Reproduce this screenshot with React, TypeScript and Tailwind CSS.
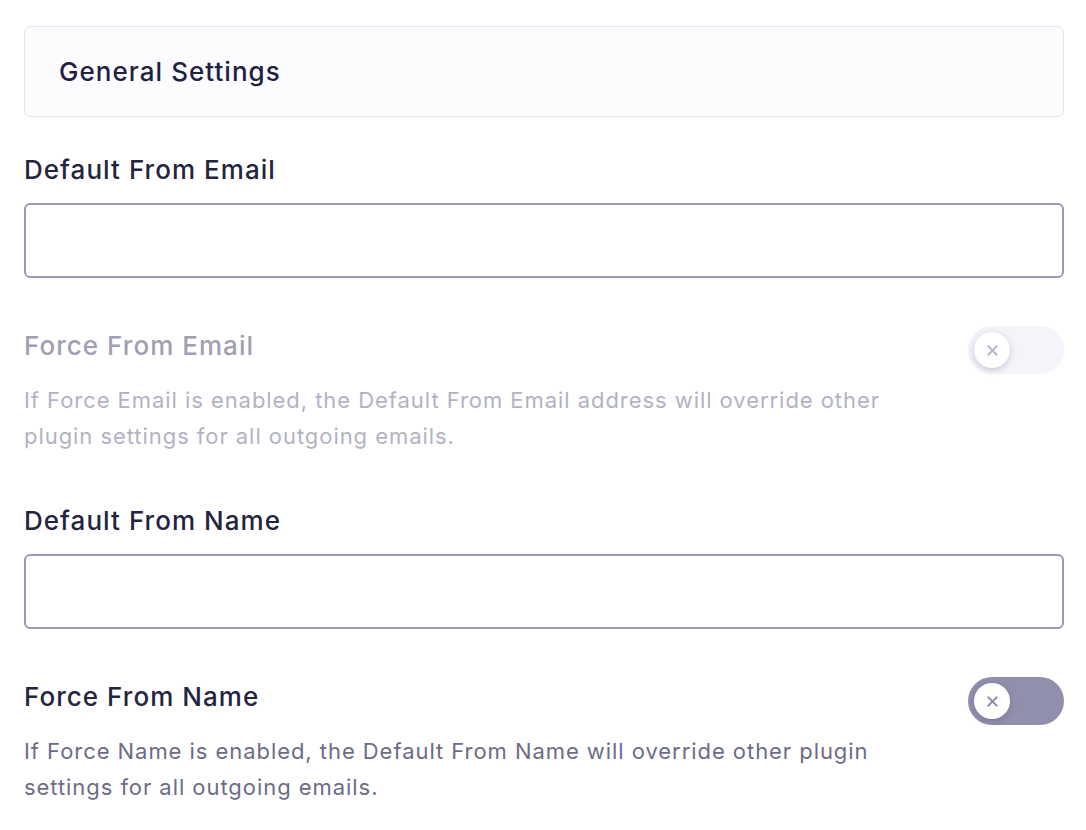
import { X } from "lucide-react";

type ToggleProps = { disabled?: boolean };

function Toggle({ disabled }: ToggleProps) {
  return (
    <div
      className={`flex h-[48px] w-[96px] shrink-0 items-center rounded-full px-[6px] ${
        disabled ? "bg-[#f4f4fa]" : "bg-[#9090ad]"
      }`}
    >
      <div className="flex h-[36px] w-[36px] items-center justify-center rounded-full bg-white shadow-[0_2px_6px_rgba(60,60,100,0.25)]">
        <X
          size={17}
          strokeWidth={2.5}
          className={disabled ? "text-[#b4b4c8]" : "text-[#8a8aa6]"}
        />
      </div>
    </div>
  );
}

function Field({ label, mt }: { label: string; mt: string }) {
  return (
    <div className={mt}>
      <label className="block text-[26px] leading-[32px] font-medium tracking-[0.04em] text-[#23253f]">
        {label}
      </label>
      <input
        type="text"
        className="mt-[17px] block h-[75px] w-full rounded-[6px] border-2 border-[#9a9ab4] bg-white px-4 text-[22px] outline-none"
      />
    </div>
  );
}

function ForceRow({
  label,
  help,
  disabled,
}: {
  label: string;
  help: string;
  disabled?: boolean;
}) {
  return (
    <div className="mt-[48px]">
      <div className="flex items-center justify-between">
        <span
          className={`-mt-[8px] text-[26px] leading-[32px] font-medium tracking-[0.04em] ${
            disabled ? "text-[#a0a0b5]" : "text-[#23253f]"
          }`}
        >
          {label}
        </span>
        <Toggle disabled={disabled} />
      </div>
      <p
        className={`mt-[8px] max-w-[880px] text-[22px] leading-[36px] tracking-[0.043em] ${
          disabled ? "text-[#b2b2c4]" : "text-[#6c6c86]"
        }`}
      >
        {help}
      </p>
    </div>
  );
}

export default function App() {
  return (
    <div
      className="min-h-screen bg-white pl-[24px] pr-[22px] pt-[26px]"
      style={{ fontFamily: "Inter, 'Noto Sans', sans-serif" }}
    >
      <div className="flex h-[91px] items-center rounded-[6px] border border-[#e4e5ec] bg-[#fcfcff] px-[34px]">
        <h2 className="text-[26px] font-medium tracking-[0.04em] text-[#1f2142]">
          General Settings
        </h2>
      </div>

      <Field label="Default From Email" mt="mt-[37px]" />
      <ForceRow
        label="Force From Email"
        disabled
        help="If Force Email is enabled, the Default From Email address will override other plugin settings for all outgoing emails."
      />

      <Field label="Default From Name" mt="mt-[51px]" />
      <ForceRow
        label="Force From Name"
        help="If Force Name is enabled, the Default From Name will override other plugin settings for all outgoing emails."
      />
    </div>
  );
}
